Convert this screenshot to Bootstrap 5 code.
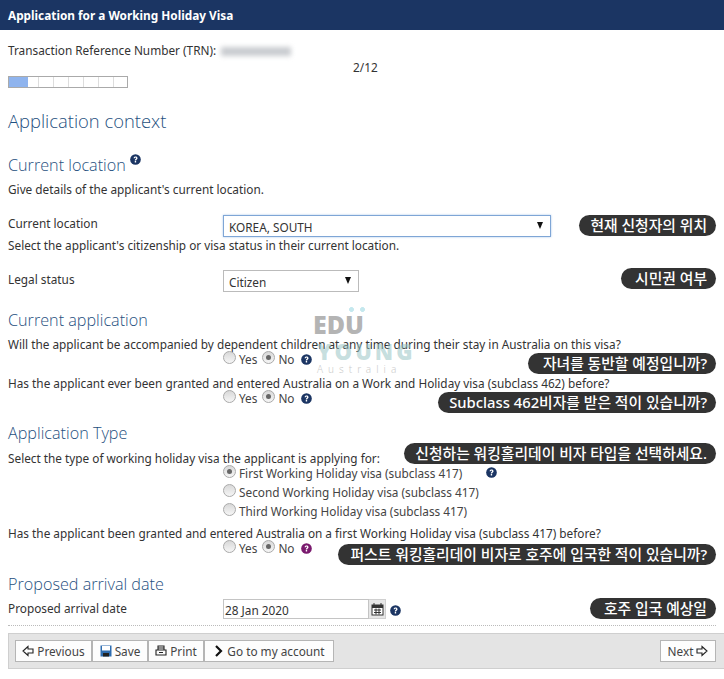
<!DOCTYPE html>
<html lang="en"><head><meta charset="utf-8"><title>Application for a Working Holiday Visa</title>
<link rel="stylesheet" href="https://cdn.jsdelivr.net/npm/bootstrap@5.3.0/dist/css/bootstrap.min.css">
<style>
html,body{height:679px;overflow:hidden}
body{font-family:"Noto Sans","Noto Sans CJK KR",sans-serif;font-size:11.8px;line-height:16px;color:#333;background:#fff;position:relative}
.hdr{height:30px;background:#1b3563;color:#fff;font-weight:700;font-size:11.8px;line-height:30px;padding-left:8px}
.wrap{padding:0 8px}
.blur{display:inline-block;width:70px;height:9px;background:#c9ccd0;filter:blur(2.5px);vertical-align:-1px;margin-left:2px}
.trn{height:16px;margin-top:12px}
.step{height:14px;margin-top:2px;padding-left:345px;line-height:14px}
.prog{width:120px;height:12px;margin-top:2px;border:1px solid #aaa;background:repeating-linear-gradient(90deg,#fff 0,#fff 14px,#ddd 14px,#ddd 15px);display:flex}
.prog i{display:block;width:19px;background:#8fb4ee}
h1.ttl{font-family:"Open Sans",sans-serif;font-size:18.4px;line-height:24px;font-weight:300;color:#1f5080;margin:21px 0 0}
h2.sub{font-family:"Open Sans",sans-serif;font-size:16.2px;line-height:20px;font-weight:300;color:#1f5080;margin-bottom:0}
.q{width:11px;height:11px;display:inline-block;flex:none;color:#1b3563}
.q.pur{color:#7a1a6e}
.q.hq{vertical-align:top;margin-top:-1px}
.q.fq{margin-left:19px}
.q.dq{margin:5px 0 0 4px}
.m-a{margin-top:22px}.m-b{margin-top:7px}.m-c{margin-top:17px}.m-d{margin-top:8px}.m-e{margin-top:5px}.m-h{margin-top:18px}.m-i{margin-top:6px}
.fld{display:flex}
.lbl{width:215px;flex:none}
.lbl.p1{padding-top:1px}
.sel{height:22px;border:1px solid #bbb;background:#fff;color:#333;display:flex;align-items:center;justify-content:space-between;padding:1px 7px 0 5px;line-height:16px}
.sel.on{width:328px;border-color:#7fa6d6;box-shadow:0 0 2px #a8c6ea}
.sel.off{width:136px}
.arr{width:0;height:0;border-left:3.5px solid transparent;border-right:3.5px solid transparent;border-top:7px solid #111;margin-top:-2px}
.opts{padding-left:215px;height:16px;margin-top:-1px;display:flex;align-items:center;color:#444}
.opts.tall{height:19px;margin-top:0}
.opts.tall.first{margin-top:-3px}
.opts.nom{margin-top:-1px}
.rd{width:13px;height:13px;border-radius:50%;border:1px solid #aaa;background:linear-gradient(#d8d8d8,#f6f6f6);flex:none;display:inline-block;margin-top:-3px;position:relative}
.rd.ck::after{content:"";position:absolute;left:3px;top:3px;width:5px;height:5px;border-radius:50%;background:#666}
.opts .t1{margin:0 5px 0 3px}
.opts .t2{margin:0 6px 0 3px}
.dt{width:146px;height:20px;margin-top:-1px;border:1px solid #c4c4c4;padding:3px 3px 0 1px;line-height:15px}
.cal{width:17px;height:20px;margin-top:-1px;background:#e6e6e6;border:1px solid #d0d0d0;border-left:0;display:flex;align-items:center;justify-content:center}
.dots{border-top:1px dotted #bbb;margin-top:6px}
.bar{margin:7px 0 0 8px;height:36px;background:#e4e4e4;border:1px solid #cfcfcf;border-right:0;display:flex;justify-content:space-between;align-items:center;padding:0 8px 0 6px}
.bar .btn{--bs-btn-border-radius:0;--bs-btn-padding-x:0;--bs-btn-padding-y:0;--bs-btn-font-size:11.8px;--bs-btn-line-height:20px;--bs-btn-color:#444;--bs-btn-bg:#fdfdfd;--bs-btn-border-color:#b5b5b5;height:22px;display:inline-flex;align-items:center;justify-content:center;gap:3px;margin:0}
.w77{width:77px}.w56{width:56px}.w130{width:130px}
.grp{display:flex}
.note{position:absolute;right:8px;height:21px;background:#333;color:#fff;border-radius:10.5px;font-size:14.8px;line-height:21px;padding:0 9px 0 11px;white-space:nowrap;font-weight:500}
.n1{top:215px}.n2{top:268px;padding-left:14px}.n3{top:353px;padding-left:15px}.n4{top:392px}.n5{top:443px}.n6{top:544px;padding-left:13px}.n7{top:598px;padding-left:14px}
.wm{position:absolute;left:313px;top:313px;pointer-events:none}
.wm b{display:block;font-family:"Open Sans",sans-serif;font-weight:800;font-size:25px;line-height:22px;color:rgba(130,130,130,.6)}
.wm .y{color:rgba(150,195,195,.55);margin:5px 0 0 4px;font-size:22px;letter-spacing:3px}
.wm span{display:block;font-size:10px;line-height:10px;margin:2px 0 0 4px;letter-spacing:5px;color:#ccc;font-weight:300}
.wm em{position:absolute;top:-6px;left:36px;width:16px;height:5px;background:radial-gradient(circle at 2.5px 2.5px,#c5e8ee 2.2px,transparent 2.4px),radial-gradient(circle at 13.5px 2.5px,#c5e8ee 2.2px,transparent 2.4px)}
</style></head><body>
<svg width="0" height="0" class="position-absolute"><defs>
<symbol id="qm" viewBox="0 0 12 12"><circle cx="6" cy="6" r="5.8" fill="currentColor"/><path d="M3.900 4.700c.1-1.400 1-2 2.200-2 1.200 0 2.100.7 2.100 1.800 0 1.500-1.500 1.400-1.500 2.500H5.200c0-1.700 1.400-1.700 1.400-2.500 0-.4-.2-.6-.6-.6-.4 0-.7.2-.7.8zM5.200 7.700h1.500v1.500H5.200z" fill="#fff"/></symbol>
</defs></svg>
<div class="hdr">Application for a Working Holiday Visa</div>
<div class="wrap">
<div class="trn">Transaction Reference Number (TRN): <span class="blur"></span></div>
<div class="step">2/12</div>
<div class="prog"><i></i></div>
<h1 class="ttl">Application context</h1>
<h2 class="sub m-a">Current location <svg class="q hq"><use href="#qm"/></svg></h2>
<div class="m-i">Give details of the applicant's current location.</div>
<div class="fld m-h"><div class="lbl">Current location</div><div class="sel on"><span>KOREA, SOUTH</span><i class="arr"></i></div></div>
<div>Select the applicant's citizenship or visa status in their current location.</div>
<div class="fld m-c"><div class="lbl p1">Legal status</div><div class="sel off"><span>Citizen</span><i class="arr"></i></div></div>
<h2 class="sub m-h">Current application</h2>
<div class="m-i">Will the applicant be accompanied by dependent children at any time during their stay in Australia on this visa?</div>
<div class="opts"><i class="rd"></i><span class="t1">Yes</span><i class="rd ck"></i><span class="t2">No</span><svg class="q"><use href="#qm"/></svg></div>
<div class="m-d">Has the applicant ever been granted and entered Australia on a Work and Holiday visa (subclass 462) before?</div>
<div class="opts"><i class="rd"></i><span class="t1">Yes</span><i class="rd ck"></i><span class="t2">No</span><svg class="q"><use href="#qm"/></svg></div>
<h2 class="sub m-c">Application Type</h2>
<div class="m-b">Select the type of working holiday visa the applicant is applying for:</div>
<div class="opts tall first"><i class="rd ck"></i><span class="t1">First Working Holiday visa (subclass 417)</span><svg class="q fq"><use href="#qm"/></svg></div>
<div class="opts tall"><i class="rd"></i><span class="t1">Second Working Holiday visa (subclass 417)</span></div>
<div class="opts tall"><i class="rd"></i><span class="t1">Third Working Holiday visa (subclass 417)</span></div>
<div class="m-e">Has the applicant been granted and entered Australia on a first Working Holiday visa (subclass 417) before?</div>
<div class="opts nom"><i class="rd"></i><span class="t1">Yes</span><i class="rd ck"></i><span class="t2">No</span><svg class="q pur"><use href="#qm"/></svg></div>
<h2 class="sub m-h">Proposed arrival date</h2>
<div class="fld m-i"><div class="lbl">Proposed arrival date</div><div class="dt">28 Jan 2020</div><div class="cal"><svg width="13" height="13" viewBox="0 0 13 13"><rect x="1" y="2" width="11" height="10" fill="#fff" stroke="#333"/><rect x="1" y="2" width="11" height="3" fill="#333"/><path d="M3 0v3M10 0v3M3 7h7M3 9.500h7M5 5.500v6M8 5.500v6" stroke="#333"/></svg></div><svg class="q dq"><use href="#qm"/></svg></div>
<div class="dots"></div>
</div>
<div class="bar">
<div class="grp">
<button class="btn w77"><svg width="12" height="12" viewBox="0 0 12 12"><path d="M6 1.500 1 6l5 4.500V8h5V4H6z" fill="none" stroke="#222" stroke-width="1.100"/></svg>Previous</button>
<button class="btn w56"><svg width="12" height="12" viewBox="0 0 12 12"><path d="M.5.500h11v11H.5z" fill="#2e6db0"/><path d="M2 1h8v4.500H2z" fill="#fff"/><path d="M3 8h6v3.500H3z" fill="#222"/></svg>Save</button>
<button class="btn w56"><svg width="12" height="12" viewBox="0 0 12 12"><path d="M3 5V1h6v4M1 5h10v5H1zM3 3h6M4 7.500h4" fill="none" stroke="#222" stroke-width="1.100"/></svg>Print</button>
<button class="btn w130"><svg width="11" height="12" viewBox="0 0 11 12"><path d="M3 1l5 5-5 5" fill="none" stroke="#111" stroke-width="2.200"/></svg>Go to my account</button>
</div>
<button class="btn w56">Next<svg width="12" height="12" viewBox="0 0 12 12"><path d="M6 1.500 11 6l-5 4.500V8H1V4h5z" fill="none" stroke="#222" stroke-width="1.100"/></svg></button>
</div>
<div class="wm"><em></em><b>EDU</b><b class="y">YOUNG</b><span>Australia</span></div>
<div class="note n1">현재 신청자의 위치</div>
<div class="note n2">시민권 여부</div>
<div class="note n3">자녀를 동반할 예정입니까?</div>
<div class="note n4">Subclass 462비자를 받은 적이 있습니까?</div>
<div class="note n5">신청하는 워킹홀리데이 비자 타입을 선택하세요.</div>
<div class="note n6">퍼스트 워킹홀리데이 비자로 호주에 입국한 적이 있습니까?</div>
<div class="note n7">호주 입국 예상일</div>
<script src="https://cdn.jsdelivr.net/npm/bootstrap@5.3.0/dist/js/bootstrap.bundle.min.js"></script>
</body></html>
